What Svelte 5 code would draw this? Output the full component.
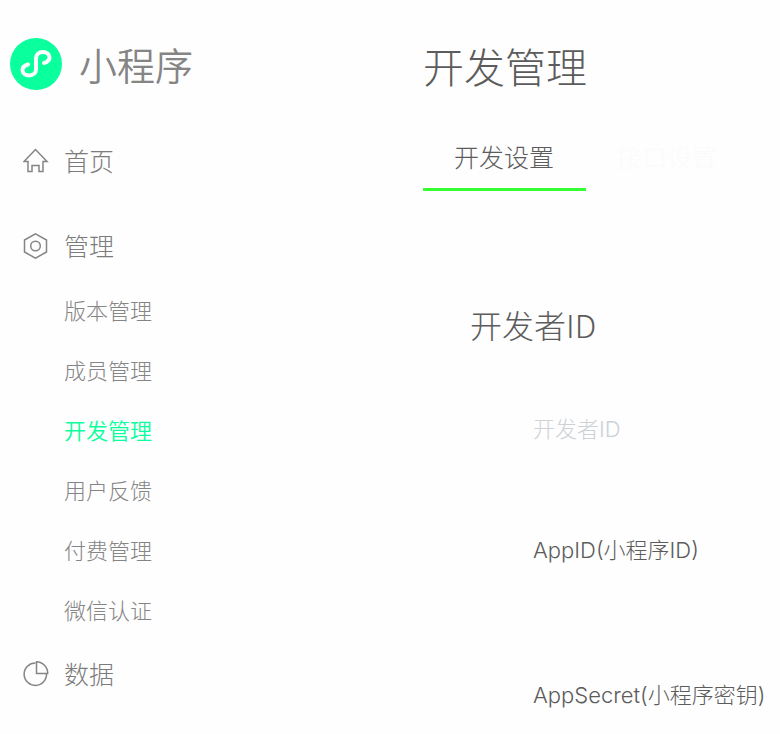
<script lang="ts">
  type Item = { id: string; label: string };

  const manage: Item[] = [
    { id: 'version', label: '版本管理' },
    { id: 'member', label: '成员管理' },
    { id: 'dev', label: '开发管理' },
    { id: 'feedback', label: '用户反馈' },
    { id: 'pay', label: '付费管理' },
    { id: 'verify', label: '微信认证' }
  ];
  const tabs: Item[] = [
    { id: 'settings', label: '开发设置' },
    { id: 'api', label: '接口设置' }
  ];

  let page = $state('dev');
  let tab = $state('settings');
</script>

<div class="layout">
  <aside class="sidebar">
    <a class="brand" href="#home">
      <svg class="logo" viewBox="0 0 52 52" aria-hidden="true">
        <circle cx="26" cy="26" r="26" fill="#0aff9d" />
        <path
          d="M18 26.500C14.500 27.500 12.500 29.500 12.500 32C12.500 35.200 15.500 37.500 19 37.500C23 37.500 26 35 26 31.500V20.500C26 16.500 29 14 33 14C36.500 14 39.500 16.200 39.500 19.500C39.500 22 37.500 24 34 25"
          fill="none"
          stroke="#fff"
          stroke-width="4"
          stroke-linecap="round"
        />
      </svg>
      <span>小程序</span>
    </a>

    <nav>
      <a class="item" href="#home">
        <svg class="icon" viewBox="0 0 26 26" aria-hidden="true">
          <path d="M12.500 1.500L1 13.500H5V23.500H9V17.500H16V23.500H20V13.500H24Z" />
        </svg>
        首页
      </a>
      <a class="item group" href="#manage">
        <svg class="icon" viewBox="0 0 26 26" aria-hidden="true">
          <path d="M12.500 0.800L23.500 7V19L12.500 25.200L1.500 19V7Z" />
          <circle cx="12.500" cy="13" r="4.800" />
        </svg>
        管理
      </a>
      <ul>
        {#each manage as m (m.id)}
          <li>
            <a href={`#${m.id}`} class:active={page === m.id} onclick={() => (page = m.id)}>{m.label}</a>
          </li>
        {/each}
      </ul>
      <a class="item" href="#data">
        <svg class="icon" viewBox="0 0 26 26" aria-hidden="true">
          <path d="M12.500 2A11.200 11.200 0 1 0 23.500 12.500" />
          <path d="M13.500 0.800V12.500H24.700A11.500 11.500 0 0 0 13.500 0.800Z" />
        </svg>
        数据
      </a>
    </nav>
  </aside>

  <main>
    <h1>开发管理</h1>
    <div class="tabs" role="tablist">
      {#each tabs as t (t.id)}
        <button role="tab" aria-selected={tab === t.id} class:active={tab === t.id} onclick={() => (tab = t.id)}>
          {t.label}
        </button>
      {/each}
    </div>

    <section>
      <h2>开发者ID</h2>
      <dl>
        <dt class="head">开发者ID</dt>
        <dt>AppID(小程序ID)</dt>
        <dt>AppSecret(小程序密钥)</dt>
      </dl>
    </section>
  </main>
</div>

<style>
  :global(body) {
    margin: 0;
    background: #fefefe;
  }

  .layout {
    display: grid;
    grid-template-columns: minmax(160px, 423px) 1fr;
    font-family: 'Noto Sans CJK SC', sans-serif;
    font-weight: 300;
    color: #5c5c5c;
  }

  a {
    color: inherit;
    text-decoration: none;
  }

  .brand {
    display: flex;
    align-items: center;
    gap: 17px;
    height: 52px;
    padding: 38px 0 36px 10px;
    font-size: 38px;
    line-height: 52px;
    font-weight: 350;
    color: #858585;
  }

  .logo {
    width: 52px;
    height: 52px;
  }

  .item {
    display: flex;
    align-items: flex-start;
    gap: 15px;
    height: 68px;
    padding-left: 23px;
    font-size: 25px;
    line-height: 68px;
    color: #7c7c7c;
  }

  .group {
    margin-top: 17px;
  }

  .icon {
    width: 26px;
    height: 26px;
    margin-top: 22px;
    fill: none;
    stroke: #858585;
    stroke-width: 1.5;
  }

  ul {
    list-style: none;
    margin: 0;
    padding: 0 0 0 64px;
  }

  li {
    font-size: 22px;
    line-height: 60px;
    color: #858585;
  }

  li .active {
    color: #0aff9d;
    font-weight: 350;
  }

  h1 {
    margin: 0;
    padding-top: 35px;
    font-size: 41px;
    line-height: 60px;
    font-weight: 300;
  }

  .tabs {
    display: flex;
    margin-top: 32px;
  }

  .tabs button {
    padding: 9px 32px 12px 31px;
    border: 0;
    border-bottom: 3px solid transparent;
    background: none;
    font: inherit;
    font-size: 25px;
    line-height: 40px;
    white-space: nowrap;
    color: #fbfbfb;
    cursor: pointer;
  }

  .tabs .active {
    border-color: #3f3;
    color: #5c5c5c;
  }

  section {
    padding: 108px 0 0 47px;
  }

  h2 {
    margin: 0;
    font-size: 32px;
    line-height: 50px;
    font-weight: 300;
  }

  dl {
    margin: 0;
    padding: 60px 0 0 63px;
    font-family: Inter, 'Noto Sans CJK SC', sans-serif;
  }

  dt {
    padding-bottom: 105px;
    font-size: 22px;
    line-height: 40px;
    white-space: nowrap;
  }

  dt:last-child {
    padding-bottom: 0;
  }

  .head {
    padding-bottom: 81px;
    color: #cdd2d6;
  }
</style>
